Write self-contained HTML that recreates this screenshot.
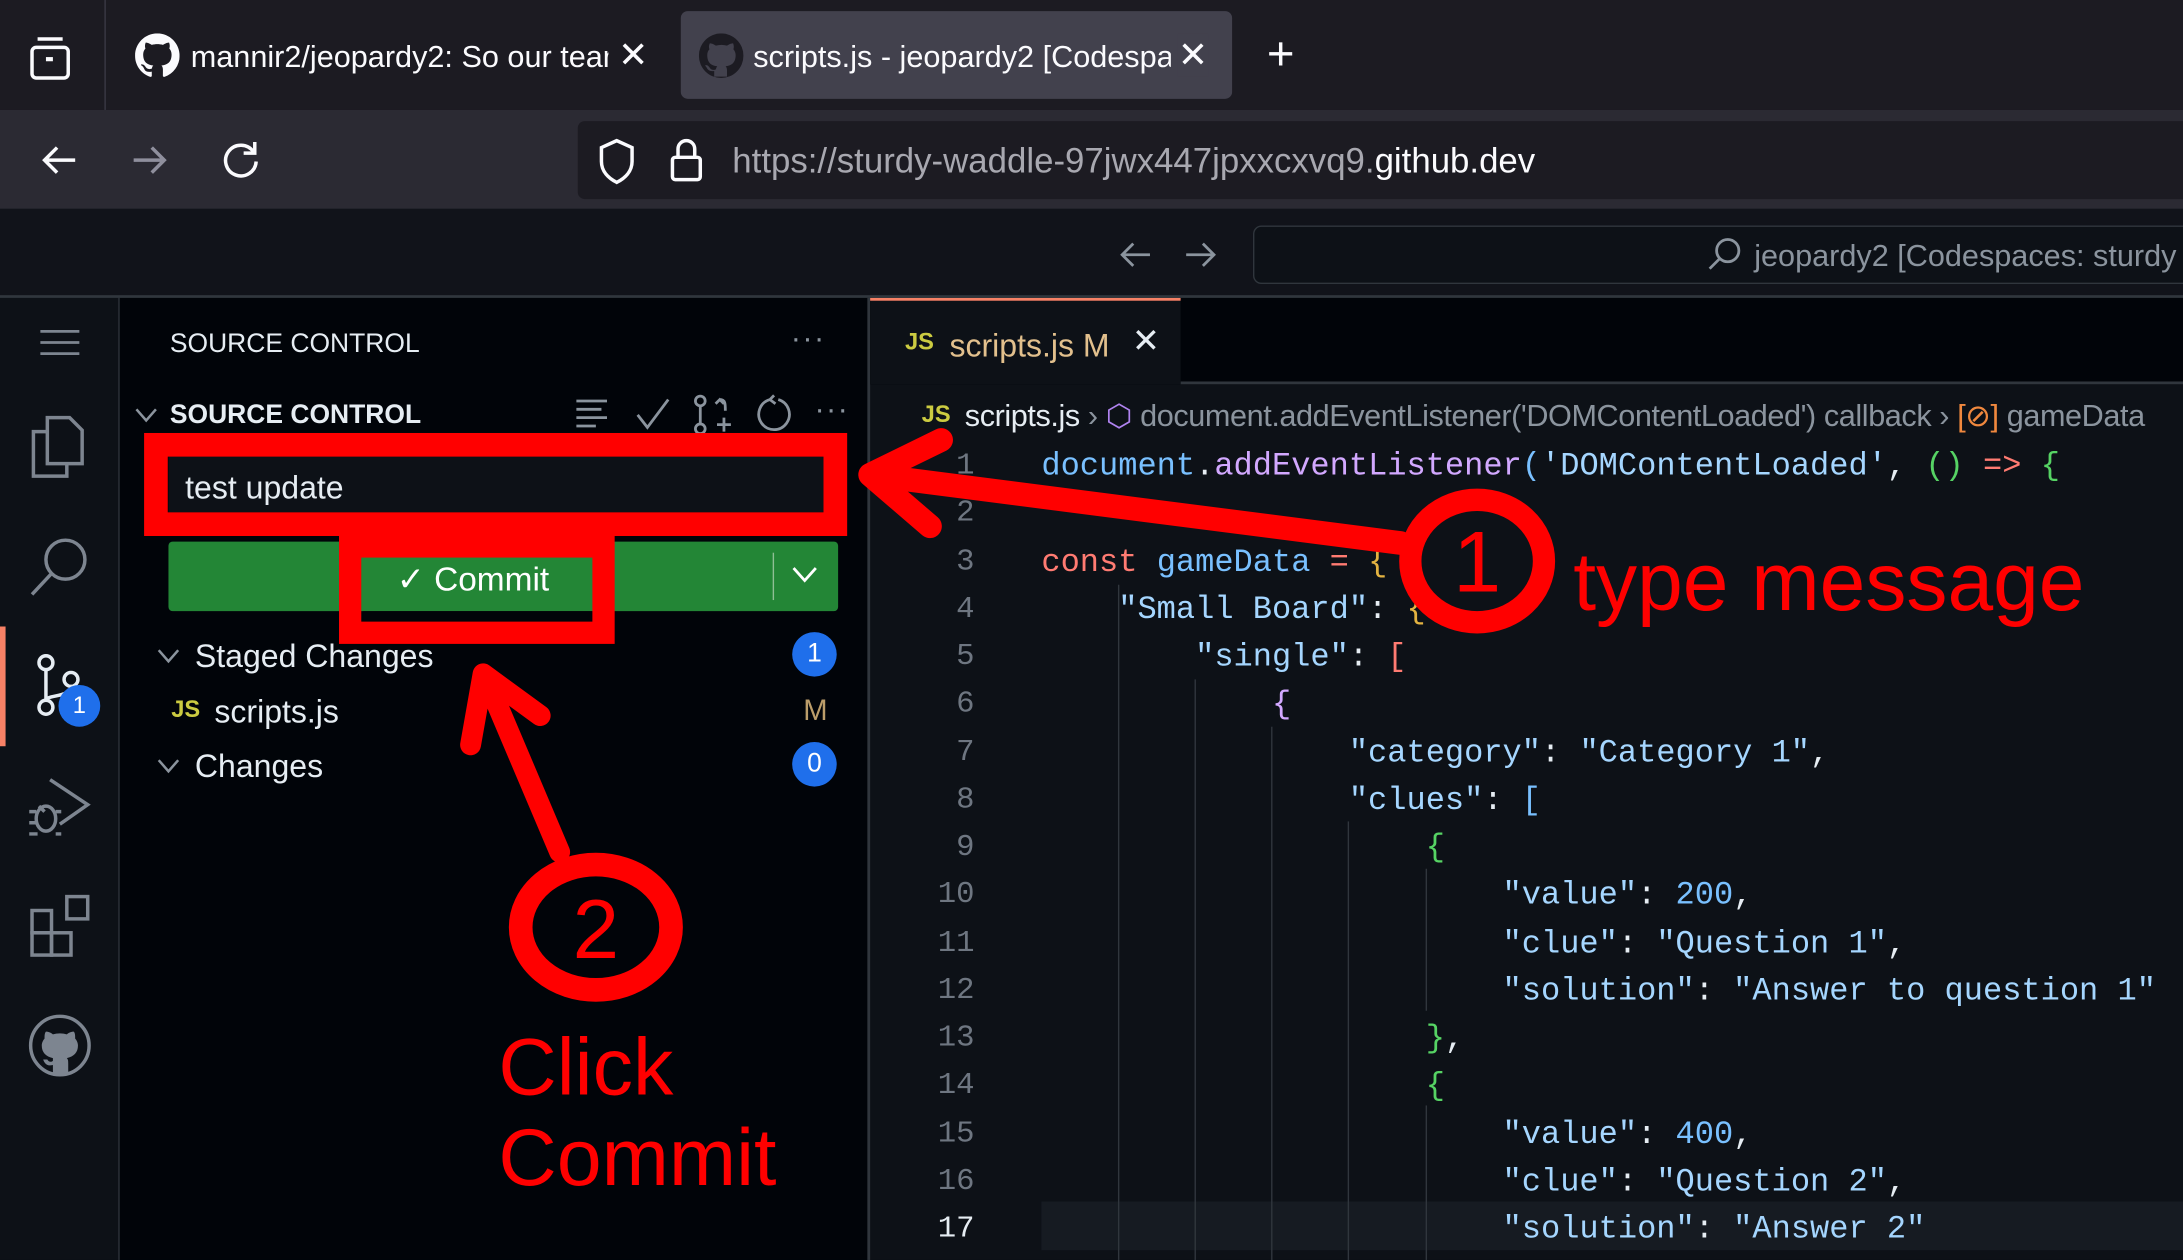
<!DOCTYPE html>
<html><head><meta charset="utf-8"><style>
html,body{margin:0;padding:0;background:#0d1117;overflow:hidden}
#s{position:absolute;left:0;top:0;width:1568px;height:905px;transform:scale(1.39222);transform-origin:0 0;font-family:"Liberation Sans",sans-serif;overflow:hidden;background:#0d1117}
.a{position:absolute}
.code{font-family:"Liberation Mono",monospace;font-size:23px;color:#a5d6ff;white-space:pre;line-height:34.25px}
.ln{font-family:"Liberation Mono",monospace;font-size:22px;color:#6e7681;text-align:right;width:60px;line-height:34.25px}
.ui{color:#e6edf3;font-size:22px;white-space:nowrap}
.badge{width:32px;height:32px;border-radius:16px;background:#1f6feb;color:#fff;font-size:19px;text-align:center;line-height:32px}
</style></head><body><div id="s">
<div class="a" style="left:0;top:0;width:1568px;height:79px;background:#1c1b22"></div>
<div class="a" style="left:75px;top:0;width:1px;height:79px;background:#3a3944"></div>
<svg class="a" style="left:20px;top:24px" width="32" height="34" viewBox="0 0 32 34"><rect x="3" y="10" width="26" height="22" rx="3" fill="none" stroke="#fbfbfe" stroke-width="2.5"/><path d="M7 4h18" stroke="#fbfbfe" stroke-width="2.5"/><rect x="13" y="17" width="5" height="3" fill="#fbfbfe"/></svg>
<svg class="a" style="left:97px;top:24px" width="32" height="32" viewBox="0 0 16 16"><path fill="#fbfbfe" d="M8 0C3.58 0 0 3.58 0 8c0 3.540 2.29 6.53 5.47 7.59.4.07.55-.17.55-.38 0-.19-.01-.82-.01-1.49-2.01.37-2.530-.49-2.69-.94-.09-.23-.48-.94-.82-1.13-.28-.15-.68-.52-.01-.53.63-.01 1.08.58 1.23.82.72 1.21 1.87.87 2.33.66.07-.52.28-.87.51-1.07-1.78-.2-3.64-.89-3.64-3.95 0-.87.31-1.590.82-2.150-.08-.2-.36-1.02.08-2.12 0 0 .67-.21 2.2.82.64-.18 1.32-.27 2-.27.68 0 1.36.09 2 .27 1.53-1.04 2.2-.82 2.2-.82.44 1.1.16 1.92.08 2.12.51.56.82 1.27.82 2.15 0 3.07-1.87 3.75-3.65 3.95.29.25.54.73.54 1.48 0 1.07-.01 1.93-.01 2.2 0 .21.15.46.55.38A8.01 8.01 0 0016 8c0-4.42-3.58-8-8-8z"/></svg>
<div class="a ui" style="left:137px;top:28px;color:#fbfbfe;width:300px;overflow:hidden">mannir2/jeopardy2: So our team</div>
<div class="a" style="left:444px;top:24px;color:#fbfbfe;font-size:26px">✕</div>
<div class="a" style="left:489px;top:8px;width:396px;height:63px;background:#42414d;border-radius:5px"></div>
<svg class="a" style="left:502px;top:24px" width="32" height="32" viewBox="0 0 16 16"><circle cx="8" cy="8" r="8" fill="#1c1b22"/><path fill="#42414d" d="M5.5 15.5v-2c-2 .3-2.5-.8-2.7-1.2-.3-.5-.9-.9-.2-.9.6 0 1 .6 1.2.8.7 1.2 1.9.9 2.3.7.1-.5.3-.9.5-1.1-1.8-.2-3.6-.9-3.6-4 0-.9.3-1.6.8-2.1-.1-.2-.4-1 .1-2.1 0 0 .7-.2 2.2.8a7.5 7.5 0 014 0c1.5-1 2.2-.8 2.2-.8.4 1.1.2 1.9.1 2.1.5.6.8 1.3.8 2.1 0 3.1-1.9 3.8-3.6 4 .3.3.5.7.5 1.5v2.2"/></svg>
<div class="a ui" style="left:541px;top:28px;color:#fbfbfe;width:300px;overflow:hidden">scripts.js - jeopardy2 [Codespaces</div>
<div class="a" style="left:846px;top:24px;color:#fbfbfe;font-size:26px;background:#42414d">✕</div>
<div class="a" style="left:910px;top:20px;color:#fbfbfe;font-size:34px">+</div>
<div class="a" style="left:0;top:79px;width:1568px;height:71px;background:#2b2a33"></div>
<svg class="a" style="left:28px;top:100px" width="30" height="30" viewBox="0 0 30 30"><path d="M26 15H4M13 6l-9 9 9 9" fill="none" stroke="#fbfbfe" stroke-width="2.5"/></svg>
<svg class="a" style="left:92px;top:100px" width="30" height="30" viewBox="0 0 30 30"><path d="M4 15h22M17 6l9 9-9 9" fill="none" stroke="#8f8f9d" stroke-width="2.5"/></svg>
<svg class="a" style="left:157px;top:99px" width="32" height="32" viewBox="0 0 32 32"><path d="M25 10A11 11 0 1 0 27 17" fill="none" stroke="#fbfbfe" stroke-width="2.5"/><path d="M26 3v8h-8" fill="none" stroke="#fbfbfe" stroke-width="2.5"/></svg>
<div class="a" style="left:415px;top:87px;width:1160px;height:56px;background:#1c1b22;border-radius:5px"></div>
<svg class="a" style="left:428px;top:99px" width="30" height="34" viewBox="0 0 30 34"><path d="M15 2L4 7v10c0 7 5 12 11 15 6-3 11-8 11-15V7z" fill="none" stroke="#fbfbfe" stroke-width="2.5"/></svg>
<svg class="a" style="left:480px;top:98px" width="26" height="34" viewBox="0 0 26 34"><rect x="3" y="15" width="20" height="16" rx="2" fill="none" stroke="#fbfbfe" stroke-width="2.5"/><path d="M7 15V9a6 6 0 0 1 12 0v6" fill="none" stroke="#fbfbfe" stroke-width="2.5"/></svg>
<div class="a" style="left:526px;top:102px;font-size:25px;color:#a8a8b0;white-space:nowrap">https://sturdy-waddle-97jwx447jpxxcxvq9.<span style="color:#fbfbfe">github.dev</span></div>
<div class="a" style="left:0;top:150px;width:1568px;height:63px;background:#11131a"></div>
<div class="a" style="left:0;top:212px;width:1568px;height:2px;background:#30363d"></div>
<svg class="a" style="left:803px;top:170px" width="26" height="26" viewBox="0 0 26 26"><path d="M23 13H3M11 5l-8 8 8 8" fill="none" stroke="#8b949e" stroke-width="2"/></svg>
<svg class="a" style="left:849px;top:170px" width="26" height="26" viewBox="0 0 26 26"><path d="M3 13h20M15 5l8 8-8 8" fill="none" stroke="#8b949e" stroke-width="2"/></svg>
<div class="a" style="left:900px;top:162px;width:680px;height:40px;background:#0d1117;border:1px solid #30363d;border-radius:6px"></div>
<svg class="a" style="left:1226px;top:170px" width="26" height="26" viewBox="0 0 26 26"><circle cx="15" cy="10" r="8" fill="none" stroke="#8b949e" stroke-width="2"/><path d="M9 16L2 23" stroke="#8b949e" stroke-width="2"/></svg>
<div class="a" style="left:1260px;top:171px;color:#8b949e;font-size:22px;white-space:nowrap">jeopardy2 [Codespaces: sturdy w</div>
<div class="a" style="left:0;top:214px;width:85px;height:691px;background:#0d1117"></div>
<div class="a" style="left:85px;top:214px;width:1px;height:691px;background:#30363d"></div>
<svg class="a" style="left:28px;top:234px" width="30" height="24" viewBox="0 0 30 24"><path d="M1 4h28M1 12h28M1 20h28" stroke="#7d8590" stroke-width="2"/></svg>
<svg class="a" style="left:20px;top:296px" width="44" height="48" viewBox="0 0 44 48"><path d="M14 4h16l9 9v24H14z" fill="none" stroke="#7d8590" stroke-width="2.5"/><path d="M14 14H4v32h24v-9" fill="none" stroke="#7d8590" stroke-width="2.5"/></svg>
<svg class="a" style="left:20px;top:384px" width="46" height="46" viewBox="0 0 46 46"><circle cx="27" cy="18" r="14" fill="none" stroke="#7d8590" stroke-width="2.5"/><path d="M17 28L3 43" stroke="#7d8590" stroke-width="2.5"/></svg>
<div class="a" style="left:0;top:450px;width:4px;height:86px;background:#f78166"></div>
<svg class="a" style="left:22px;top:468px" width="44" height="50" viewBox="0 0 44 50"><g fill="none" stroke="#e6edf3" stroke-width="2.5"><circle cx="11" cy="8" r="5"/><circle cx="29" cy="20" r="5"/><circle cx="11" cy="40" r="5"/><path d="M11 13v22M29 25c0 8-18 6-18 10"/></g></svg>
<div class="a badge" style="left:42px;top:492px;width:30px;height:30px;line-height:30px;font-size:17px">1</div>
<svg class="a" style="left:18px;top:555px" width="50" height="50" viewBox="0 0 50 50"><g fill="none" stroke="#7d8590" stroke-width="2.5"><path d="M18 5l27 18-20 14"/><ellipse cx="15" cy="33" rx="7" ry="9"/><path d="M3 28h5M3 36h5M3 44h6M22 28h4M22 44h4M10 24l4 4"/></g></svg>
<svg class="a" style="left:20px;top:642px" width="48" height="48" viewBox="0 0 48 48"><g fill="none" stroke="#7d8590" stroke-width="2.5"><rect x="3" y="12" width="14" height="16"/><rect x="3" y="28" width="14" height="16"/><rect x="17" y="28" width="14" height="16"/><rect x="28" y="2" width="15" height="16"/></g></svg>
<svg class="a" style="left:20px;top:727px" width="46" height="48" viewBox="0 0 46 48"><circle cx="23" cy="24" r="21" fill="none" stroke="#7d8590" stroke-width="2.5"/><path fill="#7d8590" d="M18 44v-6c-4 1-6-1-7-4h3c1 2 3 2 4 1v-2c-5-1-8-4-8-9 0-2 1-4 2-5 0-2 0-4 1-5 2 0 4 1 5 2 3-1 7-1 10 0 1-1 3-2 5-2 1 1 1 3 1 5 1 1 2 3 2 5 0 5-3 8-8 9 1 1 1 2 1 4v7z"/></svg>
<div class="a" style="left:86px;top:214px;width:538px;height:691px;background:#010409"></div>
<div class="a" style="left:623px;top:214px;width:2px;height:691px;background:#30363d"></div>
<div class="a ui" style="left:122px;top:237px;font-size:19px;color:#e6edf3">SOURCE CONTROL</div>
<div class="a" style="left:568px;top:230px;color:#8b949e;font-size:22px;letter-spacing:1px">···</div>
<svg class="a" style="left:96px;top:290px" width="18" height="16" viewBox="0 0 18 16"><path d="M2 4l7 8 7-8" fill="none" stroke="#8b949e" stroke-width="1.8"/></svg>
<div class="a ui" style="left:122px;top:288px;font-size:19px;font-weight:bold">SOURCE CONTROL</div>
<svg class="a" style="left:412px;top:285px" width="26" height="24" viewBox="0 0 26 24"><path d="M2 3h22M2 9h18M2 15h22M2 21h14" stroke="#8b949e" stroke-width="2"/></svg>
<svg class="a" style="left:456px;top:285px" width="26" height="24" viewBox="0 0 26 24"><path d="M2 13l7 9L24 2" fill="none" stroke="#8b949e" stroke-width="2"/></svg>
<svg class="a" style="left:497px;top:283px" width="30" height="30" viewBox="0 0 30 30"><g fill="none" stroke="#8b949e" stroke-width="2"><circle cx="6" cy="5" r="3.5"/><circle cx="6" cy="25" r="3.5"/><path d="M6 9v12M18 22h10M23 17v10M20 4c4 0 4 3 4 8M17 7l3-3 3 3"/></g></svg>
<svg class="a" style="left:541px;top:283px" width="28" height="30" viewBox="0 0 28 30"><path d="M12 4a11 11 0 1 0 6 0M12 4l3-3M12 4l4 3" fill="none" stroke="#8b949e" stroke-width="2"/></svg>
<div class="a" style="left:585px;top:281px;color:#8b949e;font-size:22px;letter-spacing:1px">···</div>
<div class="a" style="left:121px;top:328px;width:472px;height:40px;background:#0d1117"></div>
<div class="a ui" style="left:133px;top:337px;font-size:23px;color:#e6edf3">test update</div>
<div class="a" style="left:121px;top:389px;width:481px;height:50px;background:#238636;border-radius:3px"></div>
<div class="a" style="left:555px;top:397px;width:1px;height:34px;background:#8fbf95"></div>
<svg class="a" style="left:568px;top:406px" width="20" height="14" viewBox="0 0 20 14"><path d="M2 2l8 9 8-9" fill="none" stroke="#fff" stroke-width="2"/></svg>
<div class="a" style="left:261px;top:439px;width:164px;height:10px;background:#010409"></div>
<div class="a ui" style="left:285px;top:402px;font-size:24px;color:#fff">✓ Commit</div>
<svg class="a" style="left:112px;top:463px" width="18" height="16" viewBox="0 0 18 16"><path d="M2 4l7 8 7-8" fill="none" stroke="#8b949e" stroke-width="1.8"/></svg>
<div class="a ui" style="left:140px;top:458px;font-size:23px">Staged Changes</div>
<div class="a badge" style="left:569px;top:454px">1</div>
<div class="a" style="left:123px;top:500px;color:#cbcb41;font-weight:bold;font-size:17px">JS</div>
<div class="a ui" style="left:154px;top:498px;font-size:23px">scripts.js</div>
<div class="a" style="left:577px;top:499px;color:#bb9d6a;font-size:21px">M</div>
<svg class="a" style="left:112px;top:542px" width="18" height="16" viewBox="0 0 18 16"><path d="M2 4l7 8 7-8" fill="none" stroke="#8b949e" stroke-width="1.8"/></svg>
<div class="a ui" style="left:140px;top:537px;font-size:23px">Changes</div>
<div class="a badge" style="left:569px;top:533px">0</div>
<div class="a" style="left:625px;top:214px;width:943px;height:62px;background:#010409"></div>
<div class="a" style="left:848px;top:274px;width:720px;height:2px;background:#30363d"></div>
<div class="a" style="left:625px;top:214px;width:223px;height:62px;background:#0d1117"></div>
<div class="a" style="left:625px;top:214px;width:223px;height:2px;background:#f78166"></div>
<div class="a" style="left:650px;top:236px;color:#cbcb41;font-weight:bold;font-size:17px">JS</div>
<div class="a ui" style="left:682px;top:235px;font-size:23px;color:#e2c08d">scripts.js M</div>
<div class="a" style="left:813px;top:231px;color:#e6edf3;font-size:24px">✕</div>
<div class="a" style="left:662px;top:288px;color:#cbcb41;font-weight:bold;font-size:17px">JS</div>
<div class="a ui" style="left:693px;top:286px;font-size:22px;color:#e6edf3;letter-spacing:-0.3px">scripts.js <span style="color:#8b949e">›</span> <span style="color:#b083f0">⬡</span> <span style="color:#8b949e">document.addEventListener('DOMContentLoaded') callback › <span style="color:#f0883e">[⊘]</span> gameData</span></div>
<div class="a" style="left:748px;top:863px;width:820px;height:35px;background:#161b22"></div>
<div class="a" style="left:803px;top:420px;width:1px;height:485px;background:#30363d"></div>
<div class="a" style="left:858px;top:488px;width:1px;height:417px;background:#30363d"></div>
<div class="a" style="left:913px;top:522px;width:1px;height:383px;background:#30363d"></div>
<div class="a" style="left:968px;top:590px;width:1px;height:315px;background:#30363d"></div>
<div class="a" style="left:1024px;top:624px;width:1px;height:102px;background:#30363d"></div>
<div class="a" style="left:1024px;top:794px;width:1px;height:111px;background:#30363d"></div>
<div class="a ln" style="left:640px;top:318px">1<br>2<br>3<br>4<br>5<br>6<br>7<br>8<br>9<br>10<br>11<br>12<br>13<br>14<br>15<br>16<br><span style="color:#e6edf3">17</span></div>
<div class="a code" style="left:748px;top:318px"><span style="color:#79c0ff">document</span><span style="color:#e6edf3">.</span><span style="color:#d2a8ff">addEventListener</span><span style="color:#79c0ff">(</span>'DOMContentLoaded'<span style="color:#e6edf3">, </span><span style="color:#56d364">()</span> <span style="color:#ff7b72">=&gt;</span> <span style="color:#56d364">{</span>

<span style="color:#ff7b72">const</span> <span style="color:#79c0ff">gameData</span> <span style="color:#ff7b72">=</span> <span style="color:#e3b341">{</span>
    "Small Board"<span style="color:#e6edf3">:</span> <span style="color:#e3b341">{</span>
        "single"<span style="color:#e6edf3">:</span> <span style="color:#ff7b72">[</span>
            <span style="color:#d2a8ff">{</span>
                "category"<span style="color:#e6edf3">:</span> "Category 1"<span style="color:#e6edf3">,</span>
                "clues"<span style="color:#e6edf3">:</span> <span style="color:#79c0ff">[</span>
                    <span style="color:#56d364">{</span>
                        "value"<span style="color:#e6edf3">:</span> <span style="color:#79c0ff">200</span><span style="color:#e6edf3">,</span>
                        "clue"<span style="color:#e6edf3">:</span> "Question 1"<span style="color:#e6edf3">,</span>
                        "solution"<span style="color:#e6edf3">:</span> "Answer to question 1"
                    <span style="color:#56d364">}</span><span style="color:#e6edf3">,</span>
                    <span style="color:#56d364">{</span>
                        "value"<span style="color:#e6edf3">:</span> <span style="color:#79c0ff">400</span><span style="color:#e6edf3">,</span>
                        "clue"<span style="color:#e6edf3">:</span> "Question 2"<span style="color:#e6edf3">,</span>
                        "solution"<span style="color:#e6edf3">:</span> "Answer 2"</div>
<svg class="a" style="left:0;top:0" width="1568" height="905" viewBox="0 0 1568 905">
<g fill="none" stroke="#ff0000">
<rect x="112" y="319.5" width="488" height="57" stroke-width="17"/>
<rect x="251.5" y="392.5" width="182" height="62" stroke-width="16"/>
<path d="M1006 390L640 343" stroke-width="17" stroke-linecap="round"/>
<path d="M676 316L625 341L668 378" stroke-width="17" stroke-linecap="round" stroke-linejoin="round"/>
<path d="M402 612L352 494" stroke-width="15" stroke-linecap="round"/>
<path d="M338 535L347 484L388 514" stroke-width="15" stroke-linecap="round" stroke-linejoin="round"/>
<ellipse cx="1061" cy="403" rx="48" ry="44" stroke-width="16"/>
<ellipse cx="428" cy="666" rx="54" ry="45" stroke-width="17"/>
</g>
<g fill="#ff0000" font-family="Liberation Sans, sans-serif">
<text x="1061" y="425" font-size="62" text-anchor="middle">1</text>
<text x="428" y="688" font-size="60" text-anchor="middle">2</text>
<text x="1130" y="438" font-size="59">type message</text>
<text x="358" y="786" font-size="58">Click</text>
<text x="358" y="851" font-size="58">Commit</text>
</g>
</svg>
</div></body></html>
